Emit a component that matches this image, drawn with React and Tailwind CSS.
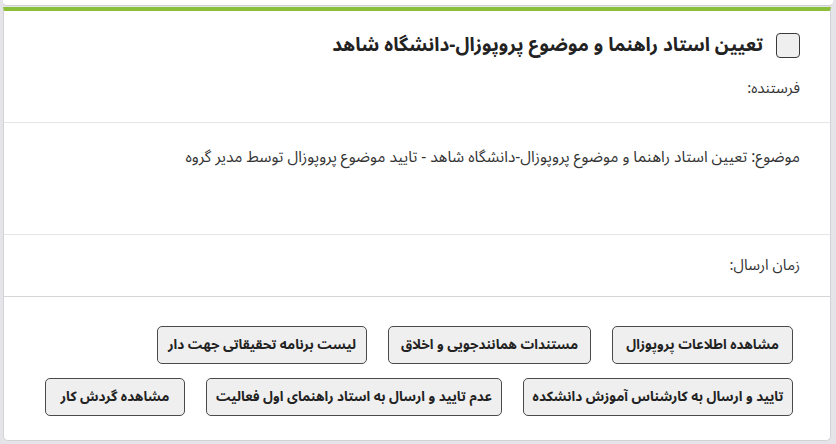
import React from 'react';

const actions = [
  [
    ['مشاهده اطلاعات پروپوزال', 'w-[181px]'],
    ['مستندات همانندجویی و اخلاق', 'w-[203px]'],
    ['لیست برنامه تحقیقاتی جهت دار', 'w-[210px]'],
  ],
  [
    ['تایید و ارسال به کارشناس آموزش دانشکده', 'w-[270px]'],
    ['عدم تایید و ارسال به استاد راهنمای اول فعالیت', 'w-[296px]'],
    ['مشاهده گردش کار', 'w-[140px]'],
  ],
];

export default function App() {
  return (
    <div
      dir="rtl"
      className="min-h-screen bg-[#e4e4e9] px-[3px] pb-[4px] text-[#333] font-['Noto_Sans_Arabic','Vazirmatn','Noto_Sans','DejaVu_Sans',sans-serif]"
    >
      <div className="h-[6px] bg-white border-b border-[#cfcfd4] rounded-b-[4px]" />
      <div className="mt-[1px] bg-white border-t-4 border-t-[#8bc03b] border-x border-b border-[#d2d2d7] rounded-b-[5px] mr-[2px]">
        <div className="pt-[21px] pb-[24px] pr-[30px] border-b border-[#e6e6e9]">
          <div className="flex items-center gap-[13px] h-[26px]">
            <button
              type="button"
              aria-label="select"
              className="w-[24px] h-[25px] rounded-[4px] border border-[#3a3a3a] bg-[#efefef] shrink-0"
            />
            <h1 className="text-[19px] font-bold text-[#222] leading-none">
              تعیین استاد راهنما و موضوع پروپوزال-دانشگاه شاهد
            </h1>
          </div>
          <p className="mt-[20px] text-[15px] leading-5">فرستنده:</p>
        </div>
        <div className="h-[112px] pt-[24px] pr-[30px] border-b border-[#e6e6e9]">
          <p className="text-[15.5px] leading-5">
            موضوع: تعیین استاد راهنما و موضوع پروپوزال-دانشگاه شاهد - تایید موضوع پروپوزال توسط مدیر گروه
          </p>
        </div>
        <div className="h-[62px] pt-[20px] pr-[30px] border-b border-[#d6d6da]">
          <p className="text-[15px] leading-5">زمان ارسال:</p>
        </div>
        <div className="pt-[29px] pb-[24px] pr-[37px] pl-[40px] flex flex-col gap-[14px]">
          {actions.map((row, i) => (
            <div key={i} className="flex gap-[21px]">
              {row.map(([label, width]) => (
                <button
                  key={label}
                  type="button"
                  className={`${width} h-[38px] rounded-[5px] border border-[#4a4a4a] bg-[#efefef] text-[13.5px] font-bold text-[#222] whitespace-nowrap`}
                >
                  {label}
                </button>
              ))}
            </div>
          ))}
        </div>
      </div>
    </div>
  );
}
